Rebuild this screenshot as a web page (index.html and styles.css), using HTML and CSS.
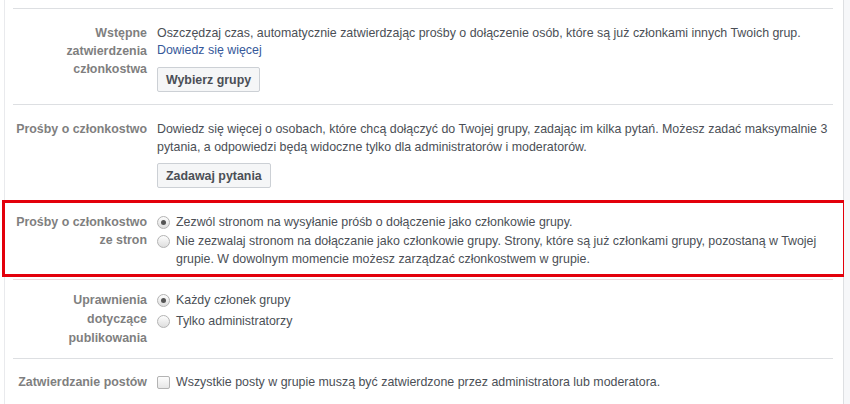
FILE: index.html
```html
<!DOCTYPE html>
<html lang="pl">
<head>
  <meta charset="UTF-8">
  <title>Ustawienia grupy</title>
  <link rel="stylesheet" href="styles.css">
</head>
<body>

<div class="page">
  <div class="panel">
    <div class="top-spacer"></div>

    <div class="row">
      <div class="label">Wstępne<br>zatwierdzenia<br>członkostwa</div>
      <div class="content">
        <div>Oszczędzaj czas, automatycznie zatwierdzając prośby o dołączenie osób, które są już członkami innych Twoich grup.</div>
        <a href="#" class="link">Dowiedz się więcej</a>
        <div><button class="btn">Wybierz grupy</button></div>
      </div>
    </div>

    <div class="row">
      <div class="label">Prośby o członkostwo</div>
      <div class="content">
        <div>Dowiedz się więcej o osobach, które chcą dołączyć do Twojej grupy, zadając im kilka pytań. Możesz zadać maksymalnie 3 pytania, a odpowiedzi będą widoczne tylko dla administratorów i moderatorów.</div>
        <div><button class="btn">Zadawaj pytania</button></div>
      </div>
    </div>

    <div class="marked">
      <div class="row row-inner">
        <div class="label">Prośby o członkostwo<br>ze stron</div>
        <div class="content">
          <label class="option"><span class="radio checked"></span><span>Zezwól stronom na wysyłanie próśb o dołączenie jako członkowie grupy.</span></label>
          <label class="option"><span class="radio"></span><span>Nie zezwalaj stronom na dołączanie jako członkowie grupy. Strony, które są już członkami grupy, pozostaną w Twojej grupie. W dowolnym momencie możesz zarządzać członkostwem w grupie.</span></label>
        </div>
      </div>
    </div>
    <div class="sep"></div>

    <div class="row row-perm">
      <div class="label">Uprawnienia<br>dotyczące<br>publikowania</div>
      <div class="content">
        <label class="option"><span class="radio checked"></span><span>Każdy członek grupy</span></label>
        <label class="option"><span class="radio"></span><span>Tylko administratorzy</span></label>
      </div>
    </div>

    <div class="row row-last">
      <div class="label">Zatwierdzanie postów</div>
      <div class="content">
        <label class="option"><span class="checkbox"></span><span>Wszystkie posty w grupie muszą być zatwierdzone przez administratora lub moderatora.</span></label>
      </div>
    </div>
  </div>
  <div class="side"></div>
</div>

</body>
</html>
```

FILE: styles.css
```css
body {
  margin: 0;
  font-family: Arial, "Liberation Sans", sans-serif;
  font-size: 12.4px;
  color: #4b4f56;
  background: #fff;
}
.page {
  display: flex;
  min-height: 404px;
}
.panel {
  width: 838px;
  margin-left: 4px;
  border-left: 1px solid #e9eaed;
  border-right: 1px solid #dddfe2;
  background: #fff;
}
.side {
  flex: 1;
  background: #f6f7f9;
}
.top-spacer {
  height: 8px;
  margin: 0 10px 0 8px;
  border-bottom: 1px solid #dddfe2;
}
.sep {
  margin: 5px 10px 0 8px;
  border-bottom: 1px solid #f0d8dc;
}
.row {
  display: flex;
  margin: 0 10px 0 8px;
  padding: 15px 0 12px;
  border-bottom: 1px solid #dddfe2;
  line-height: 18px;
}
.marked {
  margin-top: 2px;
  outline: 3px solid #e3000b;
}
.row-inner {
  padding: 10px 0 6px;
  border-bottom: none;
}
.row-perm {
  padding: 11px 0 10px;
}
.row-perm .label {
  line-height: 19px;
}
.row-last {
  padding-top: 14px;
  border-bottom: none;
}
.label {
  width: 134px;
  flex: none;
  text-align: right;
  font-weight: bold;
  color: #7f7f7f;
  margin-right: 10px;
}
.content {
  flex: 1;
  padding-right: 4px;
}
.link {
  color: #365899;
  text-decoration: none;
  display: block;
  line-height: 16px;
  margin-bottom: 2px;
}
.btn {
  margin-top: 7px;
  height: 25px;
  padding: 0 8px;
  font-family: inherit;
  font-size: 12.4px;
  font-weight: bold;
  color: #4b4f56;
  background: #f5f6f7;
  border: 1px solid #ccd0d5;
  border-radius: 2px;
}
.option {
  display: flex;
  align-items: flex-start;
}
.option + .option {
  margin-top: 1px;
}
.row-perm .option + .option {
  margin-top: 3px;
}
.radio {
  flex: none;
  width: 11px;
  height: 11px;
  margin: 3px 6px 0 0;
  border: 1px solid #b3b3b3;
  border-radius: 50%;
  background: linear-gradient(#fdfdfd, #dedede);
  box-sizing: content-box;
  position: relative;
}
.radio.checked::after {
  content: "";
  position: absolute;
  left: 3px;
  top: 3px;
  width: 5px;
  height: 5px;
  border-radius: 50%;
  background: #555;
}
.checkbox {
  flex: none;
  width: 11px;
  height: 11px;
  margin: 3px 6px 0 0;
  border: 1px solid #b3b3b3;
  border-radius: 2px;
  background: linear-gradient(#fdfdfd, #e6e6e6);
}
```
